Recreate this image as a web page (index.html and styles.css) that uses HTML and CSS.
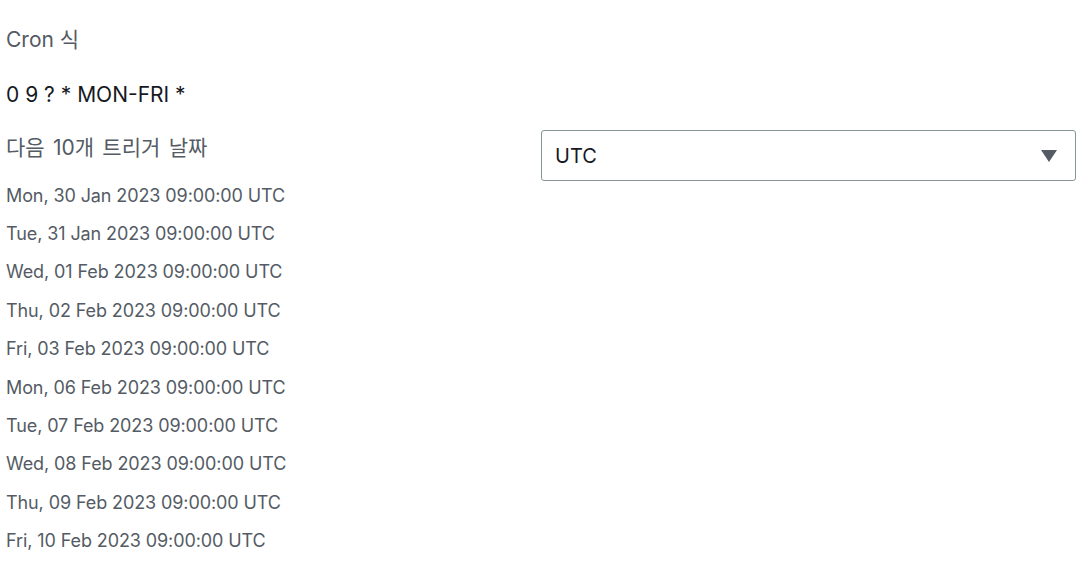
FILE: index.html
```html
<!DOCTYPE html>
<html lang="ko">
<head>
<meta charset="utf-8">
<link rel="stylesheet" href="styles.css">
</head>
<body>
<div class="page">
  <div class="field-label">Cron 식</div>
  <div class="field-value">0 9 ? * MON-FRI *</div>
  <div class="grid">
    <div class="col">
      <div class="field-label dates-label">다음 10개 트리거 날짜</div>
      <ul class="dates">
        <li>Mon, 30 Jan 2023 09:00:00 UTC</li>
        <li>Tue, 31 Jan 2023 09:00:00 UTC</li>
        <li>Wed, 01 Feb 2023 09:00:00 UTC</li>
        <li>Thu, 02 Feb 2023 09:00:00 UTC</li>
        <li>Fri, 03 Feb 2023 09:00:00 UTC</li>
        <li>Mon, 06 Feb 2023 09:00:00 UTC</li>
        <li>Tue, 07 Feb 2023 09:00:00 UTC</li>
        <li>Wed, 08 Feb 2023 09:00:00 UTC</li>
        <li>Thu, 09 Feb 2023 09:00:00 UTC</li>
        <li>Fri, 10 Feb 2023 09:00:00 UTC</li>
      </ul>
    </div>
    <div class="col">
      <div class="select">
        <span class="select-text">UTC</span>
        <svg class="caret" width="16" height="12" viewBox="0 0 16 12"><polygon points="0,0 16,0 8,12" fill="#545b64"/></svg>
      </div>
    </div>
  </div>
</div>
</body>
</html>
```
FILE: styles.css
```css
html, body {
  margin: 0;
  padding: 0;
  background: #ffffff;
}
.page {
  padding: 28px 12px 0 6px;
  font-family: "Inter", "Noto Sans CJK KR", sans-serif;
}
.field-label {
  font-size: 21px;
  line-height: 24px;
  color: #545b64;
}
.field-value {
  font-size: 21px;
  line-height: 24px;
  color: #16191f;
  margin-top: 31px;
}
.grid {
  display: grid;
  grid-template-columns: 535px 535px;
  margin-top: 23px;
}
.dates-label {
  margin-top: 6px;
  word-spacing: 2.4px;
}
.dates {
  list-style: none;
  margin: 16.5px 0 0 0;
  padding: 0;
}
.dates li {
  font-size: 18px;
  line-height: 38.4px;
  color: #545b64;
  letter-spacing: -0.1px;
}
.select {
  box-sizing: border-box;
  height: 51px;
  border: 1px solid #879596;
  border-radius: 3px;
  display: flex;
  align-items: center;
  justify-content: space-between;
  padding: 0 18px 0 13px;
}
.select-text {
  font-size: 20px;
  color: #16191f;
}
.caret {
  display: block;
}
```
